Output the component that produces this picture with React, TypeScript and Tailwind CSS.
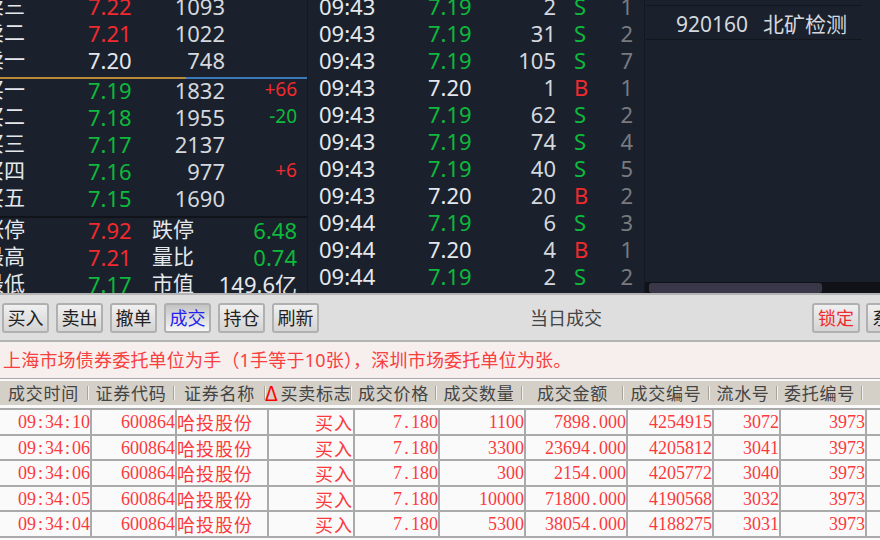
const UP = "text-[#f02a2e]";
const DOWN = "text-[#0cba3c]";
const FLAT = "text-[#e4e8ec]";

const quote = [
  ["卖三", "7.22", UP, "1093", "", ""],
  ["卖二", "7.21", UP, "1022", "", ""],
  ["卖一", "7.20", FLAT, "748", "", ""],
];
const bids = [
  ["买一", "7.19", DOWN, "1832", "+66", UP],
  ["买二", "7.18", DOWN, "1955", "-20", DOWN],
  ["买三", "7.17", DOWN, "2137", "", ""],
  ["买四", "7.16", DOWN, "977", "+6", UP],
  ["买五", "7.15", DOWN, "1690", "", ""],
];
const stats = [
  ["涨停", "7.92", UP, "跌停", "6.48", DOWN],
  ["最高", "7.21", UP, "量比", "0.74", DOWN],
  ["最低", "7.17", DOWN, "市值", "149.6亿", FLAT],
];
const ticks = [
  ["09:43", "7.19", "2", "S", "1"],
  ["09:43", "7.19", "31", "S", "2"],
  ["09:43", "7.19", "105", "S", "7"],
  ["09:43", "7.20", "1", "B", "1"],
  ["09:43", "7.19", "62", "S", "2"],
  ["09:43", "7.19", "74", "S", "4"],
  ["09:43", "7.19", "40", "S", "5"],
  ["09:43", "7.20", "20", "B", "2"],
  ["09:44", "7.19", "6", "S", "3"],
  ["09:44", "7.20", "4", "B", "1"],
  ["09:44", "7.19", "2", "S", "2"],
];
const buttons = ["买入", "卖出", "撤单", "成交", "持仓", "刷新"];
const headWidths = [89, 86, 91, 86, 85, 86, 101, 86, 68, 85];
const widths = [92, 85, 92, 86, 85, 86, 102, 86, 67, 86, 20];
const heads = ["成交时间", "证券代码", "证券名称", "买卖标志", "成交价格", "成交数量", "成交金额", "成交编号", "流水号", "委托编号"];
const trades = [
  ["09:34:10", "600864", "哈投股份", "买入", "7.180", "1100", "7898.000", "4254915", "3072", "3973", ""],
  ["09:34:06", "600864", "哈投股份", "买入", "7.180", "3300", "23694.000", "4205812", "3041", "3973", ""],
  ["09:34:06", "600864", "哈投股份", "买入", "7.180", "300", "2154.000", "4205772", "3040", "3973", ""],
  ["09:34:05", "600864", "哈投股份", "买入", "7.180", "10000", "71800.000", "4190568", "3032", "3973", ""],
  ["09:34:04", "600864", "哈投股份", "买入", "7.180", "5300", "38054.000", "4188275", "3031", "3973", ""],
];

const sans = "font-['Noto_Sans','Noto_Sans_CJK_SC',sans-serif]";
const serif = "font-['Liberation_Serif','Noto_Sans_CJK_SC',serif]";
const cjk = "font-['Noto_Sans_CJK_SC',sans-serif]";
const btn = "h-[30px] w-[47px] shrink-0 rounded-[3px] border-2 border-[#b0b0b0] bg-gradient-to-b text-[18px] leading-none";
const idle = "from-[#f0f0f0] to-[#d4d4d4] text-[#222222]";

const QuoteRow = ({ row }: { row: string[] }) => (
  <div className="-ml-[17px] flex h-[27px] items-center">
    <span className="w-[105px] shrink-0 text-[21px] text-[#e4e8ec]">{row[0]}</span>
    <span className={`w-[65px] shrink-0 ${row[2]}`}>{row[1]}</span>
    <span className="w-[72px] shrink-0 text-right text-[#d4d8de]">{row[3]}</span>
    <span className={`w-[72px] shrink-0 text-right text-[19px] ${row[5]}`}>{row[4]}</span>
  </div>
);

// SimSun 的标点也是半角等宽，这里单独撑开
const Fixed = ({ text }: { text: string }) => (
  <>
    {text.split(/([:.])/).map((part, i) =>
      part === ":" || part === "." ? (
        <span key={i} className="inline-block w-[9px] text-center">{part}</span>
      ) : (
        part
      ),
    )}
  </>
);

export default function App() {
  return (
    <div className={`h-[540px] w-[880px] overflow-hidden bg-[#fafafa] ${sans}`}>
      <div className="flex h-[293px] overflow-hidden bg-[#1b212c] text-[22px] leading-none">
        {/* 盘口 */}
        <div className="w-[308px] shrink-0 overflow-hidden border-r border-[#141820]">
          <div className="-mt-[8px]">
            {quote.map((r) => <QuoteRow key={r[0]} row={r} />)}
          </div>
          <div className="mt-[4px] flex h-[2px]">
            <div className="w-[186px] bg-[#b88a38]" />
            <div className="flex-1 bg-[#3b78b8]" />
          </div>
          <div className="-mt-[3px]">
            {bids.map((r) => <QuoteRow key={r[0]} row={r} />)}
          </div>
          <div className="mt-[5px] h-[2px] bg-[#10141a]" />
          <div className="-mt-[2px]">
            {stats.map((r) => (
              <div key={r[0]} className="-ml-[17px] flex h-[27px] items-center">
                <span className="w-[105px] shrink-0 text-[21px] text-[#e4e8ec]">{r[0]}</span>
                <span className={`w-[64px] shrink-0 ${r[2]}`}>{r[1]}</span>
                <span className="w-[50px] shrink-0 text-[21px] text-[#e4e8ec]">{r[3]}</span>
                <span className={`w-[95px] shrink-0 whitespace-nowrap text-right ${r[5]}`}>{r[4]}</span>
              </div>
            ))}
          </div>
        </div>

        {/* 分笔 */}
        <div className="w-[337px] shrink-0 overflow-hidden border-r border-[#141820]">
          <div className="-mt-[8px]">
            {ticks.map((t, i) => (
              <div key={i} className="flex h-[27px] items-center pl-[11px]">
                <span className="w-[109px] shrink-0 text-[#e4e8ec]">{t[0]}</span>
                <span className={`w-[50px] shrink-0 ${t[1] === "7.20" ? FLAT : DOWN}`}>{t[1]}</span>
                <span className="w-[78px] shrink-0 text-right text-[#d4d8de]">{t[2]}</span>
                <span className={`ml-[18px] w-[15px] shrink-0 ${t[3] === "B" ? UP : DOWN}`}>{t[3]}</span>
                <span className="ml-[24px] w-[20px] shrink-0 text-right text-[#777b80]">{t[4]}</span>
              </div>
            ))}
          </div>
        </div>

        {/* 自选 */}
        <div className="flex min-w-0 flex-1 flex-col">
          <div className="flex-1 overflow-hidden">
            <div className="mt-[5px] ml-[1px] mr-[18px] flex h-[35px] items-center gap-[15px] border-y border-[#12161d] pl-[30px] pt-[3px] text-[21px] text-[#d4d8de]">
              <span>920160</span>
              <span>北矿检测</span>
            </div>
          </div>
          <div className="flex h-[11px] items-center bg-[#111217] pl-[4px]">
            <div className="h-[10px] w-[173px] rounded-[3px] bg-[#3a3848]" />
          </div>
        </div>
      </div>

      {/* 工具栏 */}
      <div className="flex h-[49px] items-center gap-[7px] overflow-hidden border-y-2 border-y-[#b4b4b4] bg-[#dedede] pl-[2px] pt-[1px]">
        {buttons.map((b) => (
          <button
            key={b}
            className={`${btn} ${b === "成交" ? "from-[#c4c4c4] to-[#f6f6f6] text-[#2222ee]" : idle}`}
          >
            {b}
          </button>
        ))}
        <span className="ml-[204px] shrink-0 whitespace-nowrap text-[18px] text-[#444444]">当日成交</span>
        <div className="flex-1" />
        <button className={`${btn} w-[48px] from-[#f0f0f0] to-[#d4d4d4] text-[#f02a2e]`}>锁定</button>
        <button className={`${btn} -ml-[1px] -mr-[34px] w-[48px] ${idle}`}>系统</button>
      </div>

      {/* 提示 */}
      <div className="flex h-[37px] items-center whitespace-nowrap border-b border-b-[#a8a8a8] bg-[#f7eeee] pl-[3px] text-[18px] tracking-[0.2px] text-[#f84040]">
        上海市场债券委托单位为手（1手等于10张），深圳市场委托单位为张。
      </div>

      {/* 成交表 */}
      <div className={`${serif} overflow-hidden`}>
        <div className={`mt-[2px] flex h-[24px] items-center bg-[#d4d0c8] text-[17px] tracking-[0.7px] text-[#444444] ${cjk}`}>
          {heads.map((h, i) => (
            <div key={h} style={{ width: headWidths[i] }} className="flex h-full shrink-0 items-center whitespace-nowrap">
              <div className="flex min-w-0 flex-1 items-center justify-center">
                {i === 3 && <span className="mr-[2px] text-[20px] leading-none text-[#ff0000]">Δ</span>}
                {h}
              </div>
              <div className="h-[14px] w-[2px] shrink-0 border-x border-x-[#a8a49c] border-r-[#f4f2ee]" />
            </div>
          ))}
        </div>
        <div className="mt-[3px] border-t-2 border-t-[#aaaaaa]">
          {trades.map((t, i) => (
            <div key={i} className="flex h-[25.5px] border-b-2 border-b-[#aaaaaa] text-[18px] leading-[24px] text-[#fb3a3e]">
              {t.map((c, j) => (
                <div
                  key={j}
                  style={{ width: widths[j] }}
                  className={`shrink-0 overflow-visible whitespace-nowrap border-r-2 border-r-[#aaaaaa] ${
                    j === 2 ? "text-left" : "text-right"
                  } ${j === 2 || j === 3 ? `${cjk} tracking-[1px]` : ""}`}
                >
                  <Fixed text={c} />
                </div>
              ))}
            </div>
          ))}
        </div>
      </div>
    </div>
  );
}
